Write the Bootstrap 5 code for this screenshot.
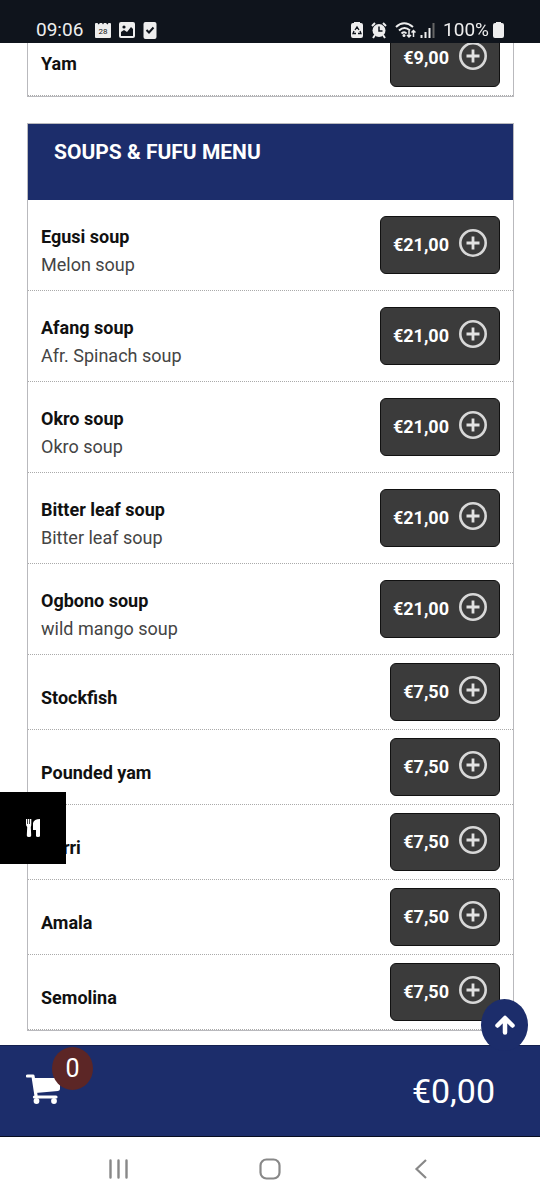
<!DOCTYPE html>
<html lang="en">
<head>
<meta charset="utf-8">
<meta name="viewport" content="width=device-width, initial-scale=1">
<title>Soups &amp; Fufu Menu</title>
<link href="https://cdn.jsdelivr.net/npm/bootstrap@5.3.0/dist/css/bootstrap.min.css" rel="stylesheet">
<style>
  body { font-family: Roboto, "Liberation Sans", sans-serif; font-size: 18px; line-height: 28px; color: #111; background: #fff; }
  .status-bar { height: 43px; padding: 16px 36px 0 36px; background: #0f141c; color: #eee; font-size: 19px; }
  .menu-page { padding: 20px 26px 169px 27px; }
  .menu-section { border: 1px solid #b9b9bd; margin-bottom: 26px; }
  .menu-section:last-child { margin-bottom: 0; }
  .section-title { background: #1c2d6b; color: #fff; font-size: 21px; font-weight: 700; padding: 14px 26px 34px; margin: 0; line-height: 28px; }
  .dish { padding: 16px 13px 11px; border-bottom: 1px dotted #aaa; }
  .dish-text { padding-top: 7px; }
  .dish-name { font-size: 18px; font-weight: 700; line-height: 28px; }
  .dish-info { color: #444; }
  .dish-plain { padding-top: 8px; padding-bottom: 8px; }
  .dish-plain .dish-text { padding-top: 21px; }
  .btn-price { height: 58px; padding: 0 12px; gap: 10px; background: #3b3b3b; border: 1px solid #111; border-radius: 6px; color: #fff; font-size: 18px; font-weight: 700; line-height: 28px; }
  .btn-price:hover { background: #222; color: #fff; }
  .btn-price svg { margin-bottom: 4px; }
  .side-tab { left: 0; bottom: 336px; width: 66px; height: 72px; background: #000; border: 0; z-index: 1020; }
  .to-top { right: 12px; bottom: 149px; width: 47px; height: 52px; background: #1c2d6b; border-radius: 50%; z-index: 1040; }
  .cart-bar { height: 92px; padding: 0 45px 0 26px; background: #1c2d6b; border-top: 1px solid #14204f; border-bottom: 1px solid #080d20; color: #fff; }
  .cart-link { color: #fff; padding-top: 28px; }
  .cart-count { left: 26px; top: 1px; width: 41px; height: 43px; background: #5c2626; font-size: 25px; }
  .cart-total { font-size: 34px; line-height: 44px; }
  .system-nav { height: 63px; padding: 0 112px 0 107px; background: #fff; }
  .system-nav button { color: #888; line-height: 0; }
</style>
</head>
<body>
<svg class="d-none" xmlns="http://www.w3.org/2000/svg">
  <symbol id="plus" viewBox="0 0 28 28"><circle cx="14" cy="14" r="12.7" fill="none" stroke="#d8d8d8" stroke-width="2.600"/><path d="M14 7.500v13M7.500 14h13" fill="none" stroke="#e2e2e2" stroke-width="2.800"/></symbol>
</svg>

<header class="status-bar fixed-top d-flex align-items-start justify-content-between">
  <div class="d-flex align-items-center gap-2">
    <span class="me-1">09:06</span>
    <svg width="16" height="18" viewBox="0 0 16 18"><path fill="#eee" d="M1 2h1.5l1 1.5L5 2h2l1 1.500L9 2h2l1.500 1.500L13.500 2H15q1 0 1 1v13q0 1-1 1H1q-1 0-1-1V3q0-1 1-1z"/><text x="8" y="13" text-anchor="middle" font-size="8" fill="#111">28</text></svg>
    <svg width="16" height="18" viewBox="0 0 16 18"><rect y="1" width="16" height="16" rx="2" fill="#eee"/><circle cx="5" cy="6" r="1.600" fill="#0f141c"/><path fill="#0f141c" d="M2 15v-4l3-2 3 2 4-5 2 2v7z"/></svg>
    <svg width="14" height="18" viewBox="0 0 14 18"><rect x=".5" y="1" width="13" height="17" rx="2" fill="#eee"/><path d="M3.500 9l2.500 2.500L10.500 6.500" fill="none" stroke="#0f141c" stroke-width="2"/></svg>
  </div>
  <div class="d-flex align-items-center">
    <svg class="me-2" width="12" height="18" viewBox="0 0 12 18"><path fill="#eee" d="M3 1h6v1h1q2 0 2 2v11q0 2-2 2H2q-2 0-2-2V4q0-2 2-2h1z"/><path d="M4 9l2-3 2 3M9 10l1 2.500H7M5 12.500H2L3 10" fill="none" stroke="#0f141c" stroke-width="1.300"/></svg>
    <svg class="me-2" width="16" height="18" viewBox="0 0 16 18"><circle cx="8" cy="9.500" r="6.500" fill="#eee"/><path d="M1 5l3-3M15 5l-3-3M4 14l-2 3M12 14l2 3" stroke="#eee" stroke-width="2"/><path d="M8 5.500V10h3.500" fill="none" stroke="#0f141c" stroke-width="1.500"/></svg>
    <svg class="me-1" width="21" height="18" viewBox="0 0 21 18"><g fill="none" stroke="#eee" stroke-width="2"><path d="M1 6q8-7.500 17 0M4 9.500q5.500-5 11 0M6.500 12.500q3-2.500 5 0"/><path stroke-width="1.500" d="M14 10v6M12 14l2 2 2-2M18.500 16v-6M16.500 11.500l2-2 2 2"/></g><circle cx="9" cy="14.500" r="1.500" fill="#eee"/></svg>
    <svg class="me-2" width="15" height="18" viewBox="0 0 15 18"><path d="M1.500 14v3M5.500 11v6M9.500 7v10" stroke="#eee" stroke-width="2"/><path d="M13.500 2v15" stroke="#666" stroke-width="2"/></svg>
    <span>100%</span>
    <svg class="ms-1" width="11" height="18" viewBox="0 0 11 18"><path fill="#eee" d="M3 1h5v1h1q2 0 2 2v11q0 2-2 2H2q-2 0-2-2V4q0-2 2-2h1z"/></svg>
  </div>
</header>

<main class="menu-page">
  <section class="menu-section">
    <div class="dish dish-plain d-flex justify-content-between align-items-start">
      <div class="dish-text"><h3 class="dish-name m-0">Yam</h3></div>
      <button type="button" class="btn btn-price d-flex align-items-center">€9,00 <svg width="28" height="28" aria-hidden="true"><use href="#plus"/></svg></button>
    </div>
  </section>

  <section class="menu-section">
    <h2 class="section-title">SOUPS &amp; FUFU MENU</h2>
    <div class="dish d-flex justify-content-between align-items-start">
      <div class="dish-text"><h3 class="dish-name m-0">Egusi soup</h3><p class="dish-info m-0">Melon soup</p></div>
      <button type="button" class="btn btn-price d-flex align-items-center">€21,00 <svg width="28" height="28" aria-hidden="true"><use href="#plus"/></svg></button>
    </div>
    <div class="dish d-flex justify-content-between align-items-start">
      <div class="dish-text"><h3 class="dish-name m-0">Afang soup</h3><p class="dish-info m-0">Afr. Spinach soup</p></div>
      <button type="button" class="btn btn-price d-flex align-items-center">€21,00 <svg width="28" height="28" aria-hidden="true"><use href="#plus"/></svg></button>
    </div>
    <div class="dish d-flex justify-content-between align-items-start">
      <div class="dish-text"><h3 class="dish-name m-0">Okro soup</h3><p class="dish-info m-0">Okro soup</p></div>
      <button type="button" class="btn btn-price d-flex align-items-center">€21,00 <svg width="28" height="28" aria-hidden="true"><use href="#plus"/></svg></button>
    </div>
    <div class="dish d-flex justify-content-between align-items-start">
      <div class="dish-text"><h3 class="dish-name m-0">Bitter leaf soup</h3><p class="dish-info m-0">Bitter leaf soup</p></div>
      <button type="button" class="btn btn-price d-flex align-items-center">€21,00 <svg width="28" height="28" aria-hidden="true"><use href="#plus"/></svg></button>
    </div>
    <div class="dish d-flex justify-content-between align-items-start">
      <div class="dish-text"><h3 class="dish-name m-0">Ogbono soup</h3><p class="dish-info m-0">wild mango soup</p></div>
      <button type="button" class="btn btn-price d-flex align-items-center">€21,00 <svg width="28" height="28" aria-hidden="true"><use href="#plus"/></svg></button>
    </div>
    <div class="dish dish-plain d-flex justify-content-between align-items-start">
      <div class="dish-text"><h3 class="dish-name m-0">Stockfish</h3></div>
      <button type="button" class="btn btn-price d-flex align-items-center">€7,50 <svg width="28" height="28" aria-hidden="true"><use href="#plus"/></svg></button>
    </div>
    <div class="dish dish-plain d-flex justify-content-between align-items-start">
      <div class="dish-text"><h3 class="dish-name m-0">Pounded yam</h3></div>
      <button type="button" class="btn btn-price d-flex align-items-center">€7,50 <svg width="28" height="28" aria-hidden="true"><use href="#plus"/></svg></button>
    </div>
    <div class="dish dish-plain d-flex justify-content-between align-items-start">
      <div class="dish-text"><h3 class="dish-name m-0">Garri</h3></div>
      <button type="button" class="btn btn-price d-flex align-items-center">€7,50 <svg width="28" height="28" aria-hidden="true"><use href="#plus"/></svg></button>
    </div>
    <div class="dish dish-plain d-flex justify-content-between align-items-start">
      <div class="dish-text"><h3 class="dish-name m-0">Amala</h3></div>
      <button type="button" class="btn btn-price d-flex align-items-center">€7,50 <svg width="28" height="28" aria-hidden="true"><use href="#plus"/></svg></button>
    </div>
    <div class="dish dish-plain d-flex justify-content-between align-items-start">
      <div class="dish-text"><h3 class="dish-name m-0">Semolina</h3></div>
      <button type="button" class="btn btn-price d-flex align-items-center">€7,50 <svg width="28" height="28" aria-hidden="true"><use href="#plus"/></svg></button>
    </div>
  </section>
</main>

<button type="button" class="side-tab position-fixed d-flex align-items-center justify-content-center p-0" aria-label="Menu categories">
  <svg width="14" height="18" viewBox="0 0 14 18" fill="#fff"><path d="M0 0h1.200v5h.7V0h1.400v5H4V0h1.300v5q0 2-.5 3l.4 8.500q0 1.500-2.200 1.500T.8 16.500L1.200 8Q0 7 0 5z"/><path d="M14 0v17q0 1-2 1t-2-1V11H7V4Q8 0 14 0z"/></svg>
</button>

<a href="#" class="to-top position-fixed d-flex align-items-center justify-content-center" aria-label="Back to top">
  <svg width="20" height="20" viewBox="0 0 20 20" fill="none" stroke="#fff" stroke-width="4.500" stroke-linecap="round" stroke-linejoin="round"><path d="M10 17.500V3.500M2.500 10.500L10 3l7.500 7.500"/></svg>
</a>

<footer class="fixed-bottom">
  <div class="cart-bar d-flex align-items-center justify-content-between">
    <a href="#cart" class="cart-link position-relative align-self-start text-decoration-none" aria-label="Shopping cart">
      <svg class="d-block" width="34" height="30" viewBox="0 0 34 30"><path d="M1.500 2h5.500L10 21.500" fill="none" stroke="#fff" stroke-width="3.200" stroke-linecap="round" stroke-linejoin="round"/><path d="M6.500 4H31q3 0 3 3v8q0 1.500-2 2L9.500 19z" fill="#fff"/><path d="M8.500 23H30" stroke="#fff" stroke-width="3.200" stroke-linecap="round"/><circle cx="10.500" cy="27" r="2.900" fill="#fff"/><circle cx="28" cy="27" r="2.900" fill="#fff"/></svg>
      <span class="cart-count position-absolute rounded-circle d-flex align-items-center justify-content-center">0</span>
    </a>
    <span class="cart-total">€0,00</span>
  </div>
  <nav class="system-nav d-flex align-items-center justify-content-between" aria-label="System">
    <button type="button" class="bg-transparent border-0 p-0" aria-label="Recent apps"><svg width="22" height="22" viewBox="0 0 22 22" stroke="currentColor" stroke-width="2.400" stroke-linecap="round"><path d="M3.500 2.500v17M11.500 2.500v17M19.500 2.500v17"/></svg></button>
    <button type="button" class="bg-transparent border-0 p-0 me-1" aria-label="Home"><svg width="22" height="22" viewBox="0 0 22 22" fill="none" stroke="currentColor" stroke-width="2.200"><rect x="1.500" y="1.500" width="19" height="19" rx="6"/></svg></button>
    <button type="button" class="bg-transparent border-0 p-0" aria-label="Back"><svg width="14" height="22" viewBox="0 0 14 22" fill="none" stroke="currentColor" stroke-width="2.200"><path d="M12 2L2.500 11l9.500 9"/></svg></button>
  </nav>
</footer>
<script src="https://cdn.jsdelivr.net/npm/bootstrap@5.3.0/dist/js/bootstrap.bundle.min.js"></script>
</body>
</html>
